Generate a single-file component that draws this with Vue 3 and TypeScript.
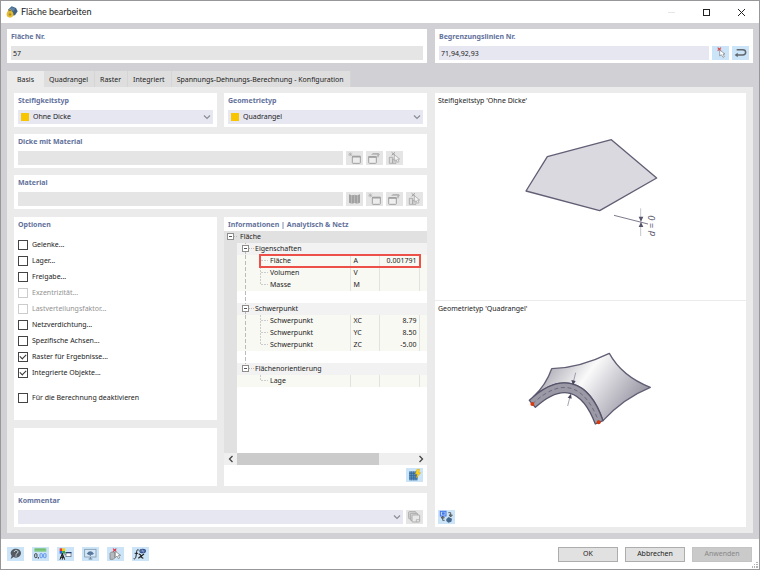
<script setup lang="ts">
import { reactive, ref } from 'vue'

interface Option {
  label: string
  checked: boolean
  disabled?: boolean
  spaced?: boolean
}

interface TreeRow {
  kind: 'group' | 'leaf' | 'last' | 'gap'
  name?: string
  symbol?: string
  value?: string
  rail?: boolean
}

const tabs = ['Basis', 'Quadrangel', 'Raster', 'Integriert', 'Spannungs-Dehnungs-Berechnung - Konfiguration']
const activeTab = ref('Basis')

const options = reactive<Option[]>([
  { label: 'Gelenke...', checked: false },
  { label: 'Lager...', checked: false },
  { label: 'Freigabe...', checked: false },
  { label: 'Exzentrizität...', checked: false, disabled: true },
  { label: 'Lastverteilungsfaktor...', checked: false, disabled: true },
  { label: 'Netzverdichtung...', checked: false },
  { label: 'Spezifische Achsen...', checked: false },
  { label: 'Raster für Ergebnisse...', checked: true },
  { label: 'Integrierte Objekte...', checked: true },
  { label: 'Für die Berechnung deaktivieren', checked: false, spaced: true },
])

const rows: TreeRow[] = [
  { kind: 'group', name: 'Eigenschaften', rail: true },
  { kind: 'leaf', name: 'Fläche', symbol: 'A', value: '0.001791', rail: true },
  { kind: 'leaf', name: 'Volumen', symbol: 'V', rail: true },
  { kind: 'last', name: 'Masse', symbol: 'M', rail: true },
  { kind: 'gap', rail: true },
  { kind: 'group', name: 'Schwerpunkt', rail: true },
  { kind: 'leaf', name: 'Schwerpunkt', symbol: 'XC', value: '8.79', rail: true },
  { kind: 'leaf', name: 'Schwerpunkt', symbol: 'YC', value: '8.50', rail: true },
  { kind: 'last', name: 'Schwerpunkt', symbol: 'ZC', value: '-5.00', rail: true },
  { kind: 'gap', rail: true },
  { kind: 'group', name: 'Flächenorientierung' },
  { kind: 'last', name: 'Lage' },
]

const footerTools = [
  { icon: 'help', label: 'Hilfe' },
  { icon: 'units', label: 'Einheiten' },
  { icon: 'display', label: 'Darstellung' },
  { icon: 'view', label: 'Ansicht' },
  { icon: 'pick-object', label: 'Auswählen' },
  { icon: 'formula', label: 'Formel' },
]
</script>

<template>
  <svg class="sprite" aria-hidden="true">
    <symbol id="i-new" viewBox="0 0 51 42">
      <path d="M13 4v12M7 10h12M8 5l10 10M18 5L8 15" stroke="#a6a6a6" stroke-width="1.6" />
      <rect x="19" y="16" width="24" height="21" rx="2" fill="#ececec" stroke="#a0a0a0" stroke-width="3" />
      <path d="M18 17h26" stroke="#a0a0a0" stroke-width="5" />
    </symbol>
    <symbol id="i-edit" viewBox="0 0 51 42">
      <rect x="8" y="17" width="23" height="20" rx="2" fill="#efefef" stroke="#a0a0a0" stroke-width="3" />
      <path d="M7 18h25" stroke="#a0a0a0" stroke-width="5" />
      <path d="M15 12l6-6h17l4 5-5 3-4-3H21z" fill="#b4b4b4" />
      <path d="M36 12v7" stroke="#a0a0a0" stroke-width="3" />
    </symbol>
    <symbol id="i-pick" viewBox="0 0 51 42">
      <path d="M17 4l10 9M27 4l-10 9" stroke="#9d9d9d" stroke-width="3" />
      <path d="M10 19h10v18H10zM20 25h10v12H20z" fill="#ddd" stroke="#a6a6a6" stroke-width="2.5" />
      <path d="M25 11v20l5-5 5 8 4-2-4-8h6z" fill="#f3f3f3" stroke="#9d9d9d" stroke-width="2" />
    </symbol>
    <symbol id="i-book" viewBox="0 0 51 42">
      <path d="M9 7l8 3v25L9 32zM18 10l7-2v25l-7 2zM26 8l7 2v25l-7-2zM34 10l8-3v25l-8 3z" fill="#a2a2a2" />
    </symbol>
    <symbol id="i-copy" viewBox="0 0 51 42">
      <g fill="#d8d8d8" stroke="#a2a2a2" stroke-width="2.5">
        <rect x="8" y="5" width="22" height="21" rx="2" />
        <rect x="13" y="10" width="22" height="21" rx="2" />
        <rect x="18" y="15" width="23" height="21" rx="2" fill="#e8e8e8" />
      </g>
      <path d="M31 36v-7h9" fill="none" stroke="#a2a2a2" stroke-width="2" />
    </symbol>
    <symbol id="i-select" viewBox="0 0 51 42">
      <path d="M17 5l10 9M27 5l-10 9" stroke="#df4545" stroke-width="3.5" />
      <path d="M23 12v18l5-4 5 8 4-2-4-8h6z" fill="#fff" stroke="#7a7f86" stroke-width="2" />
    </symbol>
    <symbol id="i-return" viewBox="0 0 51 42">
      <path d="M14 11h18q9 0 9 8t-9 8H14" fill="none" stroke="#60676e" stroke-width="4.5" />
      <path d="M8 27l9-7v14z" fill="#60676e" />
    </symbol>
    <symbol id="i-calc" viewBox="0 0 51 42">
      <rect x="9" y="10" width="26" height="27" fill="#5f92c0" />
      <path d="M9 16h26M9 23h26M9 30h26M16 10v27M23 10v27M30 10v27" stroke="#2d6090" stroke-width="2" />
      <path d="M33 4h8l-3 10h6L31 30l3-12h-6z" fill="#ffd51f" stroke="#d8a400" stroke-width="1.5" />
    </symbol>
    <symbol id="i-swap" viewBox="0 0 51 42">
      <rect x="7" y="4" width="17" height="14" fill="#bcd4ff" stroke="#3f74e8" stroke-width="3" />
      <rect x="12" y="7" width="8" height="7" fill="#3f74e8" />
      <path d="M31 8h7v12M38 21l-5-6h10zM20 31h-6V20M14 18l-5 6h10z" fill="none" stroke="#4b4b4b" stroke-width="2.5" />
      <path d="M25 27l7-6 10 5-2 9-9 3-6-5z" fill="#45688f" />
    </symbol>
    <symbol id="i-help" viewBox="0 0 51 42">
      <path d="M27 5c9 0 15 6 15 13s-6 14-15 14c-3 0-5-1-7-2l-9 6 3-10c-2-2-3-5-3-8C11 11 18 5 27 5z" fill="#555b61" />
      <path d="M22 15c0-7 11-6 11 0 0 4-6 4-6 8M27 25v4" fill="none" stroke="#cfe4f6" stroke-width="3" />
    </symbol>
    <symbol id="i-units" viewBox="0 0 51 42">
      <rect x="7" y="4" width="36" height="10" fill="#7fc87f" />
      <path d="M12 4v5M18 4v5M24 4v5M30 4v5M36 4v5" stroke="#55a055" stroke-width="1.5" />
      <g fill="none" stroke-width="2.5">
        <rect x="8" y="20" width="7" height="12" rx="3" stroke="#222" />
        <path d="M19 30v5" stroke="#222" />
        <rect x="24" y="20" width="7" height="12" rx="2" stroke="#4783e8" />
        <rect x="35" y="20" width="7" height="12" rx="2" stroke="#4783e8" />
      </g>
    </symbol>
    <symbol id="i-display" viewBox="0 0 51 42">
      <rect x="8" y="4" width="8" height="8" fill="#e33" />
      <rect x="16" y="4" width="8" height="8" fill="#f2d500" />
      <rect x="8" y="12" width="8" height="8" fill="#2b62d8" />
      <rect x="16" y="12" width="8" height="8" fill="#37a637" />
      <path d="M16 19l-7 19M16 19l7 19M10 31h12M16 19v19" stroke="#222" stroke-width="3" />
      <rect x="27" y="16" width="15" height="13" fill="#fff" stroke="#53617c" stroke-width="2" />
      <path d="M26 17h17" stroke="#28426f" stroke-width="4" />
      <path d="M22 23h5" stroke="#666" stroke-width="2" />
    </symbol>
    <symbol id="i-view" viewBox="0 0 51 42">
      <rect x="8" y="7" width="34" height="23" fill="#d6e8f7" stroke="#7f99ad" stroke-width="2.5" />
      <path d="M20 36h11M25 30v6" stroke="#6b8296" stroke-width="3" />
      <path d="M14 20q11-14 22 0l-6 4q-5-8-10 0z" fill="#56779a" />
      <path d="M25 15v9M21 21l4 5 4-5" fill="none" stroke="#56779a" stroke-width="3" />
    </symbol>
    <symbol id="i-pick-object" viewBox="0 0 51 42">
      <path d="M9 19l4-4h10v18l-4 4H9z" fill="#b5bac0" stroke="#777" stroke-width="2" />
      <path d="M18 5l10 9M28 5l-10 9" stroke="#e02f3f" stroke-width="3.5" />
      <path d="M25 13v19l5-5 4 8 4-2-4-8h7z" fill="#fff" stroke="#777" stroke-width="2" />
    </symbol>
    <symbol id="i-formula" viewBox="0 0 51 42">
      <path d="M20 9c-6-3-6 4-7 12s-2 17-8 14M8 19h10" fill="none" stroke="#222" stroke-width="3" />
      <path d="M20 22q5-2 7 5t7 6M36 21L19 34" fill="none" stroke="#222" stroke-width="3.5" />
      <ellipse cx="32" cy="12" rx="10" ry="7" fill="#354f8a" />
      <path d="M25 12h13M30 7l5 10" stroke="#a5bfe8" stroke-width="2" />
    </symbol>
    <symbol id="i-chevron" viewBox="0 0 8 6">
      <path d="M1 1.500l3 3 3-3" fill="none" stroke="#8c8c94" stroke-width="1.200" />
    </symbol>
  </svg>

  <div class="window">
    <header class="titlebar">
      <svg class="app-icon" viewBox="0 0 36 36" aria-hidden="true">
        <path d="M6 11L17 1l13 5 5 10-8 12-12 1z" fill="#3f6284" />
        <path d="M9 10l9-6 10 4-6 8z" fill="#5d84a8" />
        <path d="M7 18v-4q5-7 10 0v4" fill="none" stroke="#c9a227" stroke-width="3" />
        <circle cx="12" cy="25" r="10" fill="#e5bd35" />
        <path d="M12 20v9M8 26h8" stroke="#8b7120" stroke-width="2" />
      </svg>
      <h1>Fläche bearbeiten</h1>
      <div class="window-controls">
        <button type="button" aria-label="Minimieren" disabled>
          <svg viewBox="0 0 9 9"><path d="M1 4.500h7" stroke="#e6e6e6" /></svg>
        </button>
        <button type="button" aria-label="Maximieren">
          <svg viewBox="0 0 9 9"><rect x="1.500" y="1.500" width="6" height="6" fill="none" stroke="#222" /></svg>
        </button>
        <button type="button" aria-label="Schließen">
          <svg viewBox="0 0 9 9"><path d="M1 1l7 7M8 1l-7 7" stroke="#222" /></svg>
        </button>
      </div>
    </header>

    <main class="body">
      <div class="heads">
        <section class="card">
          <label class="caption" for="nr">Fläche Nr.</label>
          <div class="line"><input id="nr" class="field muted" value="57" readonly /></div>
        </section>
        <section class="card">
          <label class="caption" for="lines">Begrenzungslinien Nr.</label>
          <div class="line">
            <input id="lines" class="field" value="71,94,92,93" />
            <button type="button" class="tool blue" aria-label="Linien wählen"><svg><use href="#i-select" /></svg></button>
            <button type="button" class="tool blue" aria-label="Umkehren"><svg><use href="#i-return" /></svg></button>
          </div>
        </section>
      </div>

      <nav class="tabs" role="tablist">
        <button
          v-for="tab in tabs"
          :key="tab"
          type="button"
          role="tab"
          class="tab"
          :class="{ active: tab === activeTab }"
          :aria-selected="tab === activeTab"
          @click="activeTab = tab"
        >{{ tab }}</button>
      </nav>

      <div class="page">
        <div class="left">
          <div class="pair">
            <section class="card">
              <label class="caption" for="stiff">Steifigkeitstyp</label>
              <div class="line combo">
                <span class="swatch"></span>
                <select id="stiff" class="field with-swatch"><option>Ohne Dicke</option></select>
                <svg class="chevron"><use href="#i-chevron" /></svg>
              </div>
            </section>
            <section class="card">
              <label class="caption" for="geom">Geometrietyp</label>
              <div class="line combo">
                <span class="swatch"></span>
                <select id="geom" class="field with-swatch"><option>Quadrangel</option></select>
                <svg class="chevron"><use href="#i-chevron" /></svg>
              </div>
            </section>
          </div>

          <section class="card">
            <label class="caption" for="thick">Dicke mit Material</label>
            <div class="line">
              <input id="thick" class="field muted" disabled />
              <button type="button" class="tool" aria-label="Neue Dicke" disabled><svg><use href="#i-new" /></svg></button>
              <button type="button" class="tool" aria-label="Dicke bearbeiten" disabled><svg><use href="#i-edit" /></svg></button>
              <button type="button" class="tool" aria-label="Dicke wählen" disabled><svg><use href="#i-pick" /></svg></button>
              <span class="tool-space"></span>
            </div>
          </section>

          <section class="card">
            <label class="caption" for="mat">Material</label>
            <div class="line">
              <input id="mat" class="field muted" disabled />
              <button type="button" class="tool" aria-label="Bibliothek" disabled><svg><use href="#i-book" /></svg></button>
              <button type="button" class="tool" aria-label="Neues Material" disabled><svg><use href="#i-new" /></svg></button>
              <button type="button" class="tool" aria-label="Material bearbeiten" disabled><svg><use href="#i-edit" /></svg></button>
              <button type="button" class="tool" aria-label="Material wählen" disabled><svg><use href="#i-pick" /></svg></button>
            </div>
          </section>

          <div class="pair grow">
            <div class="stack">
              <section class="card options">
                <h2 class="caption">Optionen</h2>
                <label v-for="o in options" :key="o.label" class="option" :class="{ off: o.disabled, spaced: o.spaced }">
                  <input v-model="o.checked" type="checkbox" :disabled="o.disabled" />
                  <span>{{ o.label }}</span>
                </label>
              </section>
              <section class="card blank"></section>
            </div>

            <section class="card info">
              <h2 class="caption">Informationen | Analytisch &amp; Netz</h2>
              <div class="grid-area">
                <table class="tree">
                  <colgroup>
                    <col class="c-gutter" /><col /><col class="c-symbol" /><col class="c-value" /><col class="c-end" />
                  </colgroup>
                  <thead>
                    <tr>
                      <th>
                        <button type="button" class="toggle" aria-label="Fläche einklappen">
                          <svg viewBox="0 0 13 12">
                            <rect x="3.500" y="2.500" width="6" height="6" fill="#fff" stroke="#8e8e8e" />
                            <path d="M5 5.500h3" stroke="#555" /><path d="M10 5.500h3" stroke="#bbb" stroke-dasharray="1 1" />
                          </svg>
                        </button>
                      </th>
                      <th colspan="4" class="root">Fläche</th>
                    </tr>
                  </thead>
                  <tbody>
                    <tr v-for="(r, i) in rows" :key="i" :class="r.kind">
                      <td></td>
                      <td :colspan="r.kind === 'group' || r.kind === 'gap' ? 4 : 1">
                        <div class="node">
                          <button v-if="r.kind === 'group'" type="button" class="toggle" :aria-label="r.name + ' einklappen'">
                            <svg viewBox="0 0 18 12">
                              <path v-if="r.rail" d="M8.500 9v3" stroke="#bbb" stroke-dasharray="2 1" />
                              <path d="M8.500 0v2M12 5.500h5" stroke="#bbb" stroke-dasharray="1 1" />
                              <rect x="5.500" y="2.500" width="6" height="6" fill="#fff" stroke="#8e8e8e" />
                              <path d="M7 5.500h3" stroke="#555" />
                            </svg>
                          </button>
                          <svg v-else class="guide" viewBox="0 0 33 12" aria-hidden="true">
                            <path v-if="r.rail" d="M8.500 0v12" stroke="#bbb" stroke-dasharray="4 2" />
                            <path v-if="r.kind === 'leaf'" d="M23.500 0v12" stroke="#ccc" stroke-dasharray="2 1" />
                            <path v-if="r.kind === 'last'" d="M23.500 0v6" stroke="#ccc" stroke-dasharray="2 1" />
                            <path v-if="r.kind !== 'gap'" d="M24 5.500h7" stroke="#ccc" stroke-dasharray="2 1" />
                          </svg>
                          <span>{{ r.name }}</span>
                        </div>
                      </td>
                      <template v-if="r.kind === 'leaf' || r.kind === 'last'">
                        <td class="cell">{{ r.symbol }}</td>
                        <td class="cell num">{{ r.value }}</td>
                        <td class="cell"></td>
                      </template>
                    </tr>
                  </tbody>
                </table>
                <span class="marker"></span>
              </div>
              <div class="scrollbar">
                <button type="button" aria-label="Nach links"><svg viewBox="0 0 6 8"><path d="M4.500 1l-3 3 3 3" fill="none" stroke="#444" stroke-width="1.300" /></svg></button>
                <div class="track"><div class="thumb"></div></div>
                <button type="button" aria-label="Nach rechts"><svg viewBox="0 0 6 8"><path d="M1.500 1l3 3-3 3" fill="none" stroke="#444" stroke-width="1.300" /></svg></button>
              </div>
              <div class="info-foot">
                <button type="button" class="tool blue" aria-label="Berechnen"><svg><use href="#i-calc" /></svg></button>
              </div>
            </section>
          </div>

          <section class="card">
            <label class="caption" for="note">Kommentar</label>
            <div class="line">
              <div class="combo">
                <select id="note" class="field"><option></option></select>
                <svg class="chevron"><use href="#i-chevron" /></svg>
              </div>
              <button type="button" class="tool" aria-label="Kommentare" disabled><svg><use href="#i-copy" /></svg></button>
            </div>
          </section>
        </div>

        <aside class="preview">
          <section class="figure upper">
            <p>Steifigkeitstyp 'Ohne Dicke'</p>
            <svg class="drawing-a" viewBox="63 45 420 315" role="img" aria-label="Fläche ohne Dicke">
              <path d="M142 110L334 59L470 174L299 272L78 213Z" fill="#dad9df" stroke="#625f75" stroke-width="4" stroke-linejoin="round" />
              <path d="M342 286L444 312" stroke="#625f75" stroke-width="2.500" />
              <path d="M422 265V348" stroke="#a9a8b2" stroke-width="2" />
              <path d="M416 290h14l-7 15zM416 321h14l-7-15z" fill="#56546a" />
              <text transform="translate(465 349) rotate(-90)" class="dim">d = 0</text>
            </svg>
          </section>
          <section class="figure lower">
            <p>Geometrietyp 'Quadrangel'</p>
            <svg class="drawing-b" viewBox="63 24 420 240" role="img" aria-label="Fläche vom Typ Quadrangel">
              <defs>
                <linearGradient id="sheen" x1="150" y1="60" x2="400" y2="240" gradientUnits="userSpaceOnUse">
                  <stop offset="0" stop-color="#a9a8b2" />
                  <stop offset="0.380" stop-color="#fafafa" />
                  <stop offset="0.550" stop-color="#dcdbe0" />
                  <stop offset="1" stop-color="#8f8d9b" />
                </linearGradient>
              </defs>
              <path d="M155 86Q238 84 328 40Q365 108 451 142Q370 175 309 242C270 125 190 95 100 170Q138 135 155 86Z" fill="url(#sheen)" stroke="#625f75" stroke-width="4" stroke-linejoin="round" />
              <path d="M88 181C180 95 265 115 309 242L286 252C245 145 185 130 106 202Z" fill="#9b99a6" stroke="#56546a" stroke-width="4" stroke-linejoin="round" />
              <path d="M97 192C180 113 252 126 297 247" fill="none" stroke="#56546a" stroke-width="2" stroke-dasharray="12 8" />
              <path d="M227 98L219 130M203 198L211 166" stroke="#77758a" stroke-width="2" />
              <path d="M214 120l13 3-8 13zM203 173l12 3-2-15z" fill="#4a485e" />
              <circle cx="97" cy="192" r="6" fill="#d8380c" />
              <circle cx="296" cy="247" r="6" fill="#d8380c" />
            </svg>
            <button type="button" class="tool blue swap" aria-label="Darstellung wechseln"><svg><use href="#i-swap" /></svg></button>
          </section>
        </aside>
      </div>
    </main>

    <footer class="footer">
      <button v-for="t in footerTools" :key="t.icon" type="button" class="tool blue" :aria-label="t.label">
        <svg><use :href="'#i-' + t.icon" /></svg>
      </button>
      <div class="actions">
        <button type="button" class="push">OK</button>
        <button type="button" class="push">Abbrechen</button>
        <button type="button" class="push" disabled>Anwenden</button>
      </div>
      <svg class="grip" viewBox="0 0 7 7" aria-hidden="true">
        <path d="M5 1h2v1H5zM3 3h1v1H3zM5 3h2v1H5zM1 5h1v2H1zM3 5h1v2H3zM5 5h2v2H5z" fill="#b5b5b5" />
      </svg>
    </footer>
  </div>
</template>

<style>
body {
  margin: 0;
}
</style>

<style scoped>
* {
  box-sizing: border-box;
}
.sprite {
  position: absolute;
  width: 0;
  height: 0;
}
.window {
  display: flex;
  flex-direction: column;
  min-height: 100vh;
  border: 1px solid #979799;
  background: #fff;
  color: #222;
  font-family: "Noto Sans", "Open Sans", sans-serif;
  font-size: 7px;
  line-height: 10px;
}
button,
input,
select {
  margin: 0;
  padding: 0;
  border: 0;
  border-radius: 0;
  background: none;
  color: inherit;
  font: inherit;
}
svg {
  display: block;
}
.titlebar {
  display: flex;
  align-items: center;
  height: 22px;
  padding: 0 0 0 5px;
  gap: 3px;
}
.app-icon {
  width: 12px;
  height: 12px;
}
h1 {
  flex: 1;
  margin: 0;
  font-family: Lato, sans-serif;
  font-size: 9px;
  font-weight: 400;
  line-height: 12px;
}
.window-controls {
  display: flex;
}
.window-controls button {
  display: grid;
  place-items: center;
  width: 35px;
  height: 20px;
}
.window-controls svg {
  width: 9px;
  height: 9px;
}
.body {
  display: flex;
  flex: 1;
  flex-direction: column;
  padding: 6px;
  background: #d1d0d5;
}
.heads {
  display: grid;
  grid-template-columns: minmax(0, 420fr) minmax(0, 318fr);
  gap: 8px;
}
.card {
  padding: 3px 4px;
  background: #fff;
}
.caption {
  display: block;
  margin: 0;
  color: #62719b;
  font-size: 7px;
  font-weight: 700;
  line-height: 10px;
}
.line {
  display: flex;
  gap: 3px;
  margin-top: 4px;
}
.field {
  flex: 1;
  min-width: 0;
  width: 100%;
  height: 14px;
  padding: 0 2px;
  background: #e7e7f2;
  appearance: none;
}
.field.muted {
  background: #e5e5e5;
}
.combo {
  position: relative;
  flex: 1;
}
.with-swatch {
  padding-left: 15px;
}
.swatch {
  position: absolute;
  top: 3px;
  left: 3px;
  width: 8px;
  height: 8px;
  background: #f7c600;
}
.chevron {
  position: absolute;
  top: 4px;
  right: 2px;
  width: 8px;
  height: 6px;
  pointer-events: none;
}
.tool {
  flex: none;
  width: 17px;
  height: 14px;
  background: #e5e5e5;
}
.tool.blue {
  background: #cce4f7;
}
.tool svg {
  width: 17px;
  height: 14px;
}
.tool-space {
  flex: none;
  width: 17px;
}
.tabs {
  display: flex;
  margin-top: 8px;
}
.tab {
  height: 16px;
  padding: 2px 6px 0 5px;
  border-right: 1px solid #d5d5d5;
  background: #dedede;
}
.tab.active {
  padding: 2px 9px 0 10px;
  border-color: #ebebeb;
  background: #ebebeb;
}
.page {
  display: grid;
  flex: 1;
  grid-template-columns: minmax(0, 413fr) minmax(0, 311fr);
  gap: 8px;
  padding: 6px 7px;
  background: #ebebeb;
}
.left {
  display: flex;
  flex-direction: column;
  gap: 7px;
}
.pair {
  display: grid;
  grid-template-columns: minmax(0, 1fr) minmax(0, 1fr);
  gap: 7px;
}
.grow {
  flex: 1;
  margin-top: 1px;
}
.stack {
  display: flex;
  flex-direction: column;
  gap: 8px;
}
.options {
  flex: 1;
}
.options .caption {
  margin-bottom: 7px;
}
.option {
  display: flex;
  align-items: center;
  gap: 4px;
  height: 16px;
}
.option.spaced {
  margin-top: 9px;
}
.option.off {
  color: #929292;
}
.option input {
  display: grid;
  place-items: center;
  width: 10px;
  height: 10px;
  border: 1px solid #444;
  background: #fff;
  appearance: none;
}
.option.off input {
  border-color: #ccc;
}
.option input:checked::after {
  width: 3px;
  height: 5px;
  margin-bottom: 2px;
  border: solid #333;
  border-width: 0 1px 1px 0;
  content: "";
  transform: rotate(45deg);
}
.blank {
  height: 58px;
  flex: none;
}
.info {
  display: flex;
  flex-direction: column;
  padding: 3px 0;
}
.info .caption {
  padding: 0 4px;
}
.grid-area {
  position: relative;
  flex: 1;
  margin-top: 1px;
  background: linear-gradient(to right, #e1e1e1 13px, #fff 13px);
}
.tree {
  width: 100%;
  border-collapse: collapse;
  border-spacing: 0;
  table-layout: fixed;
}
.tree tr {
  height: 12px;
}
.tree th,
.tree td {
  height: 12px;
  padding: 0;
  font-weight: 400;
  line-height: 10px;
  text-align: left;
  white-space: nowrap;
}
.tree thead {
  background: #e1e1e1;
}
.tree .root {
  padding-left: 3px;
}
.c-gutter {
  width: 13px;
}
.c-symbol {
  width: 29px;
}
.c-value {
  width: 40px;
}
.c-end {
  width: 8px;
}
.group td + td {
  background: #f2f2f2;
}
.leaf td + td,
.last td + td {
  background: #f9f9f3;
}
.tree .cell {
  padding-left: 3px;
  border-left: 1px solid #e2e2e0;
}
.tree .num {
  padding-right: 2px;
  text-align: right;
}
.node {
  display: flex;
  align-items: center;
  height: 12px;
}
.toggle {
  display: block;
  height: 12px;
}
th .toggle svg {
  width: 13px;
  height: 12px;
}
.node .toggle svg {
  width: 18px;
  height: 12px;
}
.guide {
  flex: none;
  width: 33px;
  height: 12px;
}
.marker {
  position: absolute;
  top: 23px;
  right: 6px;
  left: 35px;
  height: 14px;
  border: 2px solid #ec5049;
}
.scrollbar {
  display: flex;
  height: 12px;
  background: #efefef;
}
.scrollbar button {
  display: grid;
  flex: none;
  place-items: center;
  width: 13px;
  height: 12px;
}
.scrollbar svg {
  width: 6px;
  height: 8px;
}
.track {
  flex: 1;
}
.thumb {
  width: 80%;
  height: 12px;
  background: #cbcbcb;
}
.info-foot {
  display: flex;
  justify-content: flex-end;
  padding: 3px 4px 1px;
}
.preview {
  display: flex;
  flex-direction: column;
  background: #fff;
}
.preview p {
  margin: 0;
}
.figure {
  display: flex;
  flex-direction: column;
  align-items: center;
  padding: 3px 3px;
}
.figure p {
  align-self: flex-start;
}
.upper {
  height: 208px;
  border-bottom: 1px solid #ebebeb;
}
.lower {
  flex: 1;
}
.drawing-a {
  width: 140px;
  height: 105px;
  margin-top: 29px;
}
.drawing-b {
  width: 140px;
  height: 80px;
  margin-top: 34px;
}
.dim {
  fill: #56546a;
  font-size: 28px;
  font-style: italic;
}
.swap {
  align-self: flex-start;
  margin-top: auto;
}
.footer {
  position: relative;
  display: flex;
  align-items: center;
  gap: 8px;
  height: 30px;
  padding: 0 7px 0 6px;
}
.actions {
  display: flex;
  gap: 7px;
  margin-left: auto;
}
.push {
  width: 60px;
  height: 15px;
  border: 1px solid #adadad;
  background: #e1e1e1;
}
.push:disabled {
  border-color: #c4c4c4;
  background: #cacaca;
  color: #888;
}
.grip {
  position: absolute;
  right: 1px;
  bottom: 1px;
  width: 7px;
  height: 7px;
}
</style>
